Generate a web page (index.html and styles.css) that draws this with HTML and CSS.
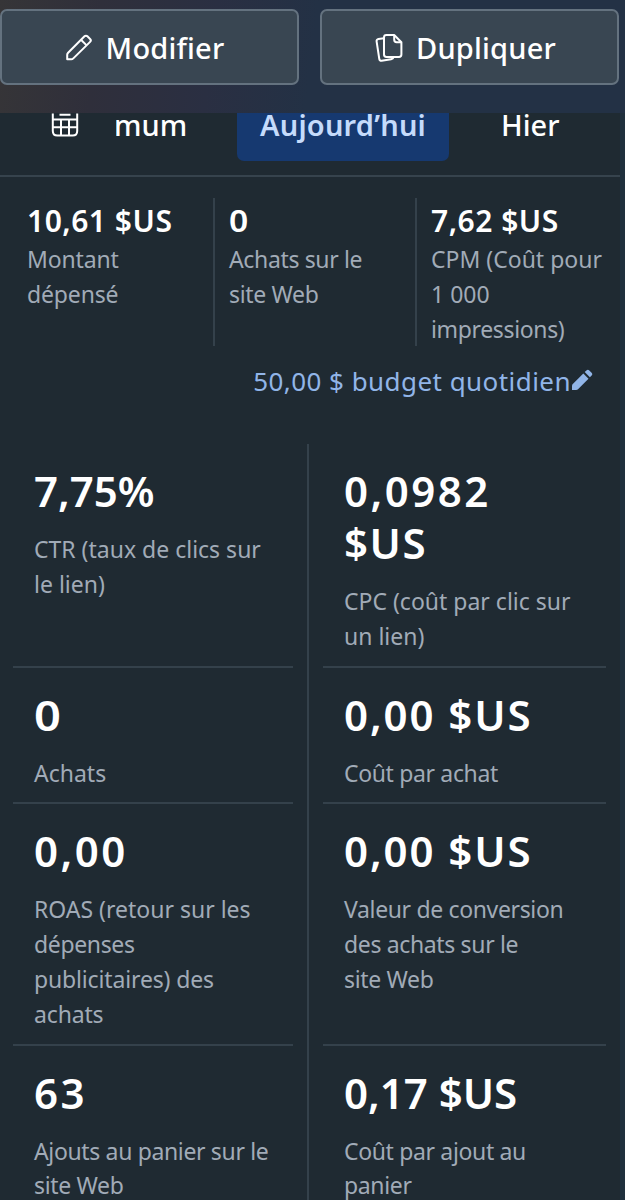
FILE: index.html
```
<!DOCTYPE html>
<html lang="fr">
<head>
    <meta charset="UTF-8">
    <meta name="viewport" content="width=device-width, initial-scale=1.0">
    <title>Publicité</title>
    <link rel="stylesheet" href="styles.css">
</head>

<body>
    <!-- Actions -->
    <header class="actions">
        <button class="action edit">
            <svg width="28" height="28" viewBox="0 0 28 28" fill="none" stroke="#fff" stroke-width="2" stroke-linejoin="round"><path d="M2.2 25.3v-4.6c0-.8.3-1.4.9-2L19.500 2.300c.9-.9 2-.9 2.900 0l2.700 2.700c.9.9.9 2 0 2.900L8.300 24.400c-.6.6-1.200.9-2 .9z"/><path d="M16 5.800l5.600 5.600"/></svg>
            <span>Modifier</span>
        </button>
        <button class="action copy">
            <svg width="28" height="30" viewBox="0 0 28 30" fill="none" stroke="#fff" stroke-width="2" stroke-linejoin="round"><path d="M9 5.300l-5.600.8c-1.300.2-2 1.100-1.800 2.300l2.700 17.600c.2 1.300 1.100 1.900 2.300 1.700l9.500-1.500c1.300-.2 2.200-.9 2.600-2.200"/><path d="M11.400 2h7.800l7.200 7.200v12.400c0 1.500-.9 2.400-2.400 2.400H11.400c-1.500 0-2.400-.9-2.400-2.400V4.400c0-1.500.9-2.400 2.400-2.400z"/><path d="M19.200 2.200v4.600c0 1.500.9 2.400 2.400 2.400h4.600"/></svg>
            <span>Dupliquer</span>
        </button>
    </header>

    <main class="content">
        <!-- Période -->
        <nav class="periods">
            <svg class="calendar" width="28" height="25" viewBox="0 0 28 25" fill="none" stroke="#fff" stroke-width="2"><path d="M1.800 0.500v17.500c0 3 1.500 4.500 4.500 4.500h15.400c3 0 4.500-1.500 4.500-4.500V0.500M1.800 6.500h24.400M1.800 14.200h24.400M10 6.500v16M18 6.500v16M8.500 1.800h11"/></svg>
            <div class="period max"><span>mum</span></div>
            <div class="period active"><span>Aujourd’hui</span></div>
            <div class="period"><span>Hier</span></div>
        </nav>

        <!-- Résumé -->
        <section class="summary">
            <div class="stat">
                <strong>10,61 $US</strong>
                <p>Montant<br>dépensé</p>
            </div>
            <div class="stat">
                <strong class="zero">0</strong>
                <p class="tight">Achats sur le<br>site Web</p>
            </div>
            <div class="stat">
                <strong>7,62 $US</strong>
                <p><span class="loose">CPM (Coût pour<br>1 000</span><br><span class="tight">impressions)</span></p>
            </div>
        </section>

        <div class="budget">
            <span>50,00 $ budget quotidien</span>
            <svg width="22" height="22" viewBox="0 0 22 22" fill="#91b5e8"><path d="M1 21v-4.200c0-.8.3-1.400.8-1.900L12.300 4.500l5.200 5.200L7 20.200c-.5.500-1.100.8-1.900.8z"/><path d="M13.700 3.100l1.700-1.700c.9-.9 2-.9 2.900 0l2.300 2.300c.9.900.9 2 0 2.900l-1.700 1.700z"/></svg>
        </div>

        <!-- Indicateurs -->
        <section class="metrics">
            <div class="cell"><div class="metric">
                <h2>7,75%</h2>
                <p class="loose">CTR (taux de clics sur<br>le lien)</p>
            </div></div>
            <div class="cell"><div class="metric">
                <h2><span class="digits">0,0982</span><br><span class="unit">$US</span></h2>
                <p class="loose">CPC (coût par clic sur<br>un lien)</p>
            </div></div>
            <div class="cell"><div class="metric">
                <h2 class="zero">0</h2>
                <p class="loose">Achats</p>
            </div></div>
            <div class="cell"><div class="metric">
                <h2 class="amount">0,00 $US</h2>
                <p class="tight">Coût par achat</p>
            </div></div>
            <div class="cell"><div class="metric">
                <h2 class="digits">0,00</h2>
                <p><span class="loose">ROAS (retour sur les</span><br><span class="tight">dépenses</span><br>publicitaires) des<br>achats</p>
            </div></div>
            <div class="cell"><div class="metric">
                <h2 class="amount">0,00 $US</h2>
                <p class="tight">Valeur de conversion<br>des achats sur le<br>site Web</p>
            </div></div>
            <div class="cell"><div class="metric">
                <h2 class="digits">63</h2>
                <p class="tight">Ajouts au panier sur le<br>site Web</p>
            </div></div>
            <div class="cell"><div class="metric">
                <h2>0,17 $US</h2>
                <p class="tight">Coût par ajout au<br>panier</p>
            </div></div>
        </section>
    </main>
</body>
</html>
```
FILE: styles.css
```
* { box-sizing: border-box; }

body {
    margin: 0;
    height: 1200px;
    overflow: hidden;
    background: #20303d;
    color: #fff;
    font-family: "Noto Sans", "Open Sans", sans-serif;
}
p, h2 { margin: 0; }
svg { flex: none; }

/* Barre d'actions */
.actions {
    display: flex;
    gap: 21px;
    height: 113px;
    padding: 9px 6px 0 0;
    background: linear-gradient(97deg, #363537 0%, #2f2f3b 16%, #2a2f42 34%, #233145 50%, #233145 100%);
}
.action {
    flex: 1;
    display: flex;
    align-items: center;
    justify-content: center;
    gap: 13px;
    height: 76px;
    padding: 1px 8px 0 0;
    border: 2px solid #64727f;
    border-radius: 7px;
    background: #394652;
    color: #fff;
    font: 500 29px "Noto Sans", sans-serif;
    letter-spacing: 0.2px;
}
.edit svg { margin-left: -2px; }

.content {
    width: 620px;
    height: 1087px;
    overflow: hidden;
    background: #1f2a32;
}

/* Onglets de période */
.periods {
    display: flex;
    height: 64px;
    padding-left: 51px;
    border-bottom: 2px solid #36434d;
    font-size: 29px;
    font-weight: 500;
    line-height: 24px;
}
.period { height: 48px; }
.max { width: 70px; margin: 0 51px 0 37px; overflow: hidden; }
.max span { margin-left: -2px; }
.active {
    width: 212px;
    margin-right: 52px;
    border-radius: 0 0 7px 7px;
    background: #163970;
    color: #c5dbfb;
    text-align: center;
    font-weight: 600;
    letter-spacing: 0.2px;
}

/* Résumé */
.summary {
    display: grid;
    grid-template-columns: 200px 202px 1fr;
    height: 147px;
    margin: 21px 0 0 13px;
}
.stat { padding-left: 14px; }
.stat + .stat { border-left: 2px solid #34414b; }
.stat strong {
    display: block;
    height: 44px;
    font-size: 30px;
    font-weight: 600;
    line-height: 45px;
    letter-spacing: 0.5px;
}
p {
    color: #a1abb7;
    font-size: 23px;
    line-height: 34.8px;
    letter-spacing: -0.15px;
    white-space: nowrap;
}
.tight { letter-spacing: -0.35px; }
.loose { letter-spacing: 0; }

.budget {
    display: flex;
    justify-content: flex-end;
    height: 99px;
    padding: 18px 27px 0 0;
    color: #91b5e8;
    font-size: 26px;
    line-height: 36px;
    letter-spacing: 0.45px;
}
.budget svg { margin-top: 6px; }

/* Grille des indicateurs */
.metrics {
    display: grid;
    grid-template-columns: 309px 311px;
}
.cell { padding: 0 14px; }
.cell:nth-child(odd) {
    padding-left: 13px;
    border-right: 2px solid #34414b;
}
.metric {
    height: 100%;
    padding: 21px 0 12px 21px;
    border-bottom: 2px solid #34414b;
}
.metric h2 {
    margin-bottom: 15px;
    font-size: 42px;
    font-weight: 600;
    line-height: 52px;
    white-space: nowrap;
}
.metric .digits { letter-spacing: 2.5px; }
.metric .amount { letter-spacing: 1.9px; }
.metric .unit { letter-spacing: 1.5px; }
/* zéro seul, un peu plus large */
.zero {
    width: max-content;
    transform: scaleX(1.12);
    transform-origin: left;
}
```
